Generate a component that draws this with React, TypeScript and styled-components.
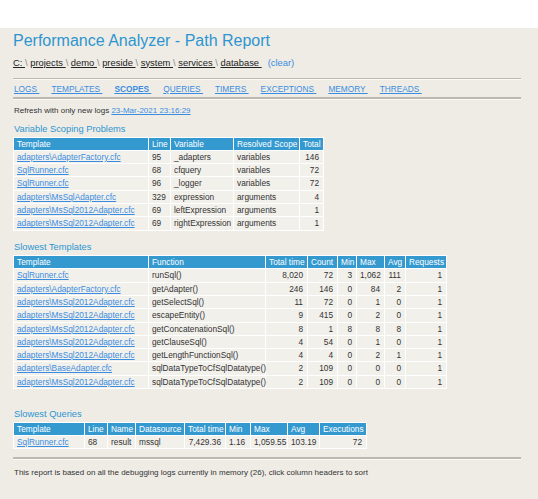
import * as React from "react";
import styled, { createGlobalStyle } from "styled-components";

const GlobalStyle = createGlobalStyle`
  html, body {
    margin: 0;
    padding: 0;
    background: #ffffff;
  }
  body {
    font-family: "Liberation Sans", Arial, sans-serif;
    color: #333333;
  }
`;

const Page = styled.div`
  margin-top: 28px;
  min-height: 471px;
  background: #efece6;
  padding: 4px 17px 0 13px;
`;

const Title = styled.h1`
  margin: 0;
  font-size: 16px;
  line-height: 18px;
  font-weight: normal;
  color: #2d95d0;
`;

const Crumbs = styled.div`
  margin-top: 6.5px;
  font-size: 9.4px;
  line-height: 11px;
  color: #888;
`;

const Crumb = styled.a`
  color: #222;
  text-decoration: underline;
  white-space: pre;
`;

const Sep = styled.span`
  color: #888;
  white-space: pre;
`;

const Clear = styled.a`
  color: #3a8de0;
  text-decoration: none;
  margin-left: 6px;
`;

const Rule = styled.div<{ $thick?: boolean }>`
  height: ${p => (p.$thick ? "2px" : "1px")};
  background: #bcb9b3;
  border-bottom: 1px solid #fbfaf7;
`;

const NavBar = styled.div`
  display: flex;
  font-size: 8.3px;
  line-height: 10px;
  margin: 4px 0 3px 1px;
`;

const NavLink = styled.a<{ $active?: boolean }>`
  color: #3a8de0;
  text-decoration: underline;
  font-weight: ${p => (p.$active ? "bold" : "normal")};
  white-space: pre;
  margin-right: 12px;
`;

const Note = styled.div`
  font-size: 8px;
  line-height: 9px;
  margin: 5.5px 0 0 1px;
`;

const Link = styled.a`
  color: #3a8de0;
  text-decoration: underline;
`;

const Heading = styled.h2<{ $top: number }>`
  margin: ${p => p.$top}px 0 2px 1px;
  font-size: 9.3px;
  line-height: 11px;
  font-weight: normal;
  color: #2d95d0;
`;

const Table = styled.table`
  border-collapse: collapse;
  table-layout: fixed;
  font-size: 8.3px;
  border: 1px solid #ffffff;
`;

const Th = styled.th`
  background: #3499cf;
  color: #ffffff;
  font-weight: normal;
  text-align: left;
  padding: 2px 3px;
  line-height: 8.3px;
  border: 1px solid #ffffff;
  white-space: nowrap;
`;

const Td = styled.td<{ $num?: boolean }>`
  background: #f2f0eb;
  text-align: ${p => (p.$num ? "right" : "left")};
  padding: 2px 4px 2px 3px;
  line-height: 8.3px;
  border: 1px solid #ffffff;
  white-space: nowrap;
  color: #333;
`;

const Footer = styled.div`
  font-size: 8px;
  line-height: 9px;
  margin: 7.5px 0 0 1px;
`;

type Col = { name: string; w: number; num?: boolean; link?: boolean };

const DataTable = ({ cols, rows }: { cols: Col[]; rows: string[][] }) => (
  <Table style={{ width: cols.reduce((s, c) => s + c.w, 0) }}>
    <colgroup>
      {cols.map(c => (
        <col key={c.name} style={{ width: c.w }} />
      ))}
    </colgroup>
    <thead>
      <tr>
        {cols.map(c => (
          <Th key={c.name}>{c.name}</Th>
        ))}
      </tr>
    </thead>
    <tbody>
      {rows.map((r, i) => (
        <tr key={i}>
          {r.map((v, j) => (
            <Td key={j} $num={cols[j].num}>
              {cols[j].link ? <Link>{v}</Link> : v}
            </Td>
          ))}
        </tr>
      ))}
    </tbody>
  </Table>
);

const scopeCols: Col[] = [
  { name: "Template", w: 135, link: true },
  { name: "Line", w: 22 },
  { name: "Variable", w: 63 },
  { name: "Resolved Scope", w: 66 },
  { name: "Total", w: 24, num: true }
];

const scopeRows = [
  ["adapters\\AdapterFactory.cfc", "95", "_adapters", "variables", "146"],
  ["SqlRunner.cfc", "68", "cfquery", "variables", "72"],
  ["SqlRunner.cfc", "96", "_logger", "variables", "72"],
  ["adapters\\MsSqlAdapter.cfc", "329", "expression", "arguments", "4"],
  ["adapters\\MsSql2012Adapter.cfc", "69", "leftExpression", "arguments", "1"],
  ["adapters\\MsSql2012Adapter.cfc", "69", "rightExpression", "arguments", "1"]
];

const templateCols: Col[] = [
  { name: "Template", w: 135, link: true },
  { name: "Function", w: 117 },
  { name: "Total time", w: 42, num: true },
  { name: "Count", w: 30, num: true },
  { name: "Min", w: 19, num: true },
  { name: "Max", w: 28, num: true },
  { name: "Avg", w: 21, num: true },
  { name: "Requests", w: 41, num: true }
];

const templateRows = [
  ["SqlRunner.cfc", "runSql()", "8,020", "72", "3", "1,062", "111", "1"],
  ["adapters\\AdapterFactory.cfc", "getAdapter()", "246", "146", "0", "84", "2", "1"],
  ["adapters\\MsSql2012Adapter.cfc", "getSelectSql()", "11", "72", "0", "1", "0", "1"],
  ["adapters\\MsSql2012Adapter.cfc", "escapeEntity()", "9", "415", "0", "2", "0", "1"],
  ["adapters\\MsSql2012Adapter.cfc", "getConcatenationSql()", "8", "1", "8", "8", "8", "1"],
  ["adapters\\MsSql2012Adapter.cfc", "getClauseSql()", "4", "54", "0", "1", "0", "1"],
  ["adapters\\MsSql2012Adapter.cfc", "getLengthFunctionSql()", "4", "4", "0", "2", "1", "1"],
  ["adapters\\BaseAdapter.cfc", "sqlDataTypeToCfSqlDatatype()", "2", "109", "0", "0", "0", "1"],
  ["adapters\\MsSql2012Adapter.cfc", "sqlDataTypeToCfSqlDatatype()", "2", "109", "0", "0", "0", "1"]
];

const queryCols: Col[] = [
  { name: "Template", w: 71, link: true },
  { name: "Line", w: 23 },
  { name: "Name", w: 28 },
  { name: "Datasource", w: 49 },
  { name: "Total time", w: 41, num: true },
  { name: "Min", w: 25 },
  { name: "Max", w: 37 },
  { name: "Avg", w: 32 },
  { name: "Executions", w: 47, num: true }
];

const queryRows = [
  ["SqlRunner.cfc", "68", "result", "mssql", "7,429.36", "1.16", "1,059.55", "103.19", "72"]
];

const crumbs = ["C:", "projects", "demo", "preside", "system", "services", "database"];
const tabs = ["LOGS", "TEMPLATES", "SCOPES", "QUERIES", "TIMERS", "EXCEPTIONS", "MEMORY", "THREADS"];

export default function App() {
  return (
    <>
      <GlobalStyle />
      <Page>
        <Title>Performance Analyzer - Path Report</Title>
        <Crumbs>
          {crumbs.map((c, i) => (
            <React.Fragment key={c}>
              <Crumb>{c + " "}</Crumb>
              {i < crumbs.length - 1 && <Sep>{"\\ "}</Sep>}
            </React.Fragment>
          ))}
          <Clear>(clear)</Clear>
        </Crumbs>
        <div style={{ marginTop: 10.5 }} />
        <Rule />
        <NavBar>
          {tabs.map(t => (
            <NavLink key={t} $active={t === "SCOPES"}>
              {t + " "}
            </NavLink>
          ))}
        </NavBar>
        <Rule $thick />
        <Note>
          Refresh with only new logs <Link>23-Mar-2021 23:16:29</Link>
        </Note>
        <Heading $top={9}>Variable Scoping Problems</Heading>
        <DataTable cols={scopeCols} rows={scopeRows} />
        <Heading $top={11.5}>Slowest Templates</Heading>
        <DataTable cols={templateCols} rows={templateRows} />
        <Heading $top={19.5}>Slowest Queries</Heading>
        <DataTable cols={queryCols} rows={queryRows} />
        <div style={{ marginTop: 8 }} />
        <Rule $thick />
        <Footer>
          This report is based on all the debugging logs currently in memory (26), click column
          headers to sort
        </Footer>
      </Page>
    </>
  );
}
